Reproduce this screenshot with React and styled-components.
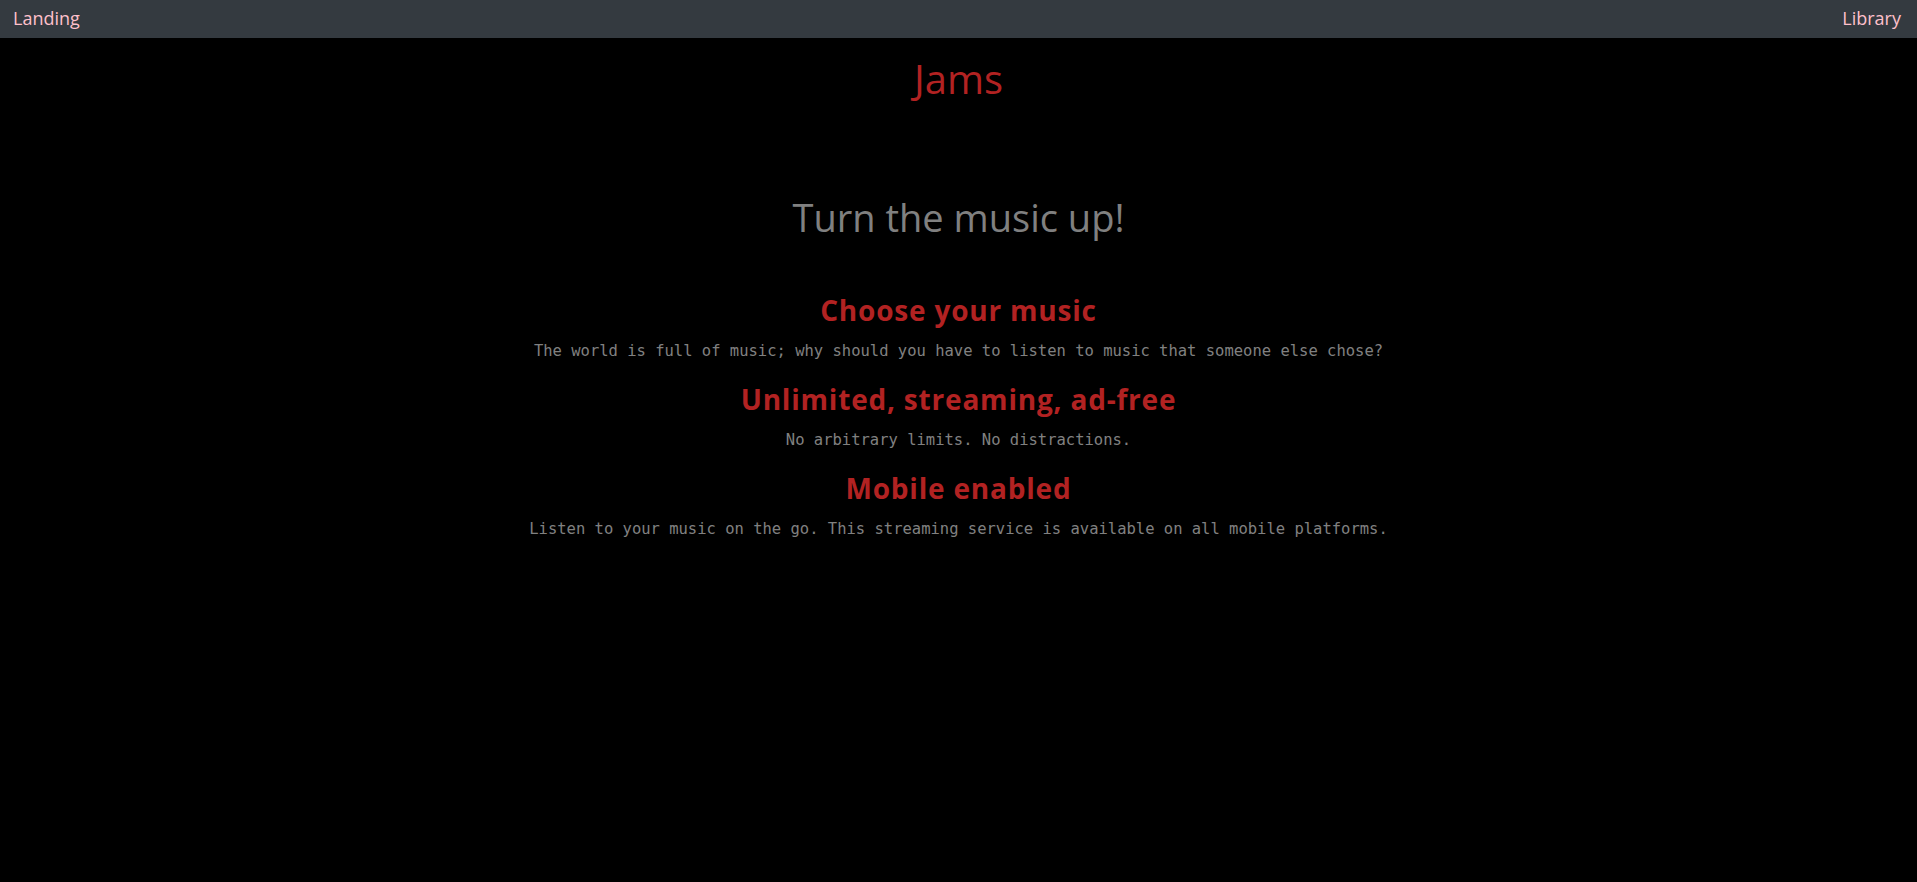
import React from "react";
import styled, { createGlobalStyle } from "styled-components";

const GlobalStyle = createGlobalStyle`
  html, body {
    margin: 0;
    padding: 0;
    background: #000;
  }
  body {
    font-family: "Open Sans", "Noto Sans", sans-serif;
    min-height: 882px;
  }
`;

const Page = styled.div`
  min-height: 882px;
  background: #000;
  display: flex;
  flex-direction: column;
`;

const NavBar = styled.nav`
  height: 38px;
  background: #343a40;
  display: flex;
  align-items: center;
  justify-content: space-between;
  padding: 0 16px 0 13px;
`;

const NavLink = styled.a`
  color: #ffc0cb;
  font-family: "Open Sans", "Noto Sans", sans-serif;
  font-size: 18px;
  text-decoration: none;
  line-height: 1;
  padding-bottom: 2px;
`;

const Main = styled.main`
  display: flex;
  flex-direction: column;
  align-items: center;
  text-align: center;
`;

const Brand = styled.h1`
  margin: 17px 0 0;
  font-family: "Open Sans", "Noto Sans", sans-serif;
  font-weight: 400;
  font-size: 40px;
  line-height: 48px;
  color: #b22222;
`;

const Tagline = styled.h2`
  margin: 90px 0 0;
  font-family: "Open Sans", "Noto Sans", sans-serif;
  font-weight: 400;
  font-size: 38px;
  line-height: 48px;
  color: #808080;
`;

const Features = styled.section`
  margin-top: 52px;
  display: flex;
  flex-direction: column;
  align-items: center;
  gap: 21px;
`;

const Feature = styled.div`
  display: flex;
  flex-direction: column;
  align-items: center;
  gap: 14px;
`;

const FeatureTitle = styled.h3`
  margin: 0;
  font-family: "Open Sans", "Noto Sans", sans-serif;
  font-weight: 700;
  font-size: 28px;
  letter-spacing: 0.8px;
  line-height: 34px;
  color: #b22222;
`;

const FeatureText = styled.p`
  margin: 0;
  font-family: "DejaVu Sans Mono", "Liberation Mono", monospace;
  font-size: 15.5px;
  line-height: 20px;
  color: #808080;
`;

const features = [
  {
    title: "Choose your music",
    text: "The world is full of music; why should you have to listen to music that someone else chose?",
  },
  {
    title: "Unlimited, streaming, ad-free",
    text: "No arbitrary limits. No distractions.",
  },
  {
    title: "Mobile enabled",
    text: "Listen to your music on the go. This streaming service is available on all mobile platforms.",
  },
];

export default function App() {
  return (
    <>
      <GlobalStyle />
      <Page>
        <NavBar>
          <NavLink href="#">Landing</NavLink>
          <NavLink href="#">Library</NavLink>
        </NavBar>
        <Main>
          <Brand>Jams</Brand>
          <Tagline>Turn the music up!</Tagline>
          <Features>
            {features.map((f) => (
              <Feature key={f.title}>
                <FeatureTitle>{f.title}</FeatureTitle>
                <FeatureText>{f.text}</FeatureText>
              </Feature>
            ))}
          </Features>
        </Main>
      </Page>
    </>
  );
}
